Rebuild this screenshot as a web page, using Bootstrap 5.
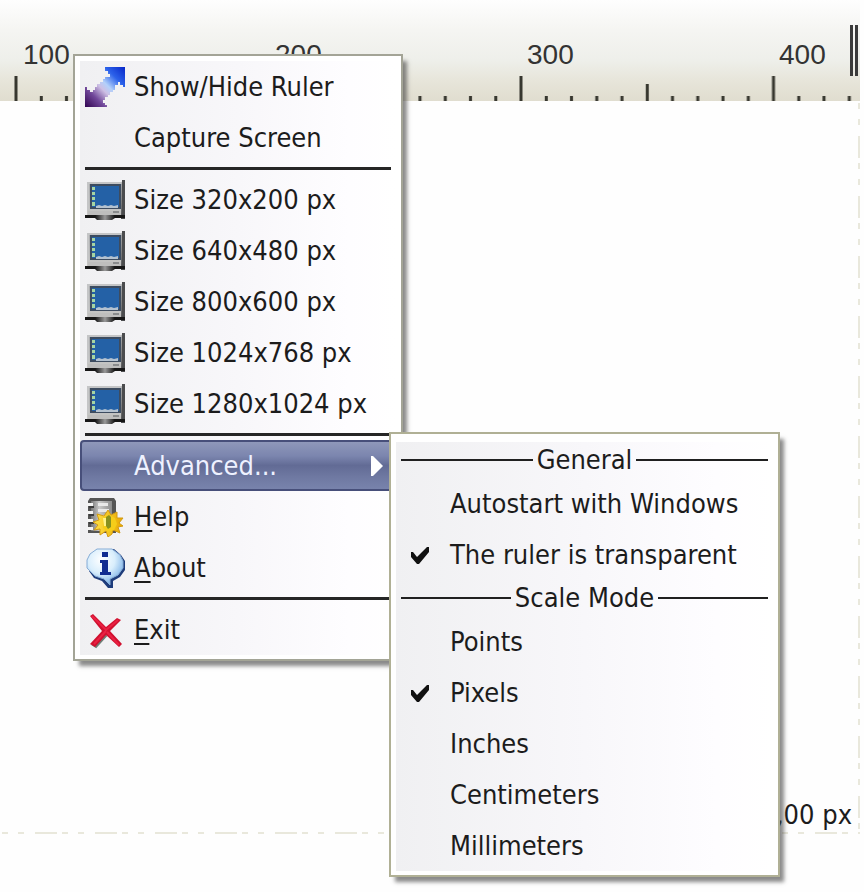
<!DOCTYPE html>
<html lang="en">
<head>
<meta charset="utf-8">
<meta name="viewport" content="width=device-width, initial-scale=1">
<title>Screen Ruler</title>
<link href="https://cdn.jsdelivr.net/npm/bootstrap@5.3.0/dist/css/bootstrap.min.css" rel="stylesheet">
<style>
  body { font-family: "DejaVu Sans Condensed", "DejaVu Sans", sans-serif; font-size: 27px; color: #1c1c1c; background: #fefefe; }
  .ruler-bar { background: linear-gradient(#fefefe 0, #f5f5f2 30%, #eeefea 60%, #e7e5da 80%, #e0ddcf 100%); font-family: "Liberation Sans", sans-serif; font-size: 28px; line-height: 28px; color: #333; height: 101px; padding: 41px 0 0 23px; margin-right: 4px; }
  .ruler-bar .major { flex: 0 0 252px; }
  .ruler-bar .ticks { position: absolute; left: 0; bottom: 0; width: 100%; height: 25px; }
  .grip { position: absolute; right: 2px; top: 25px; width: 8px; height: 51px; border: solid #3a3a3a; border-width: 0 3px; }
  .capture-area { margin: 0 4px 58px 0; line-height: 32px; padding: 0 8px 3px 0;
    --dash: transparent 0 2px, #e9e8dc 2px 8px, transparent 8px 18px, #e9e8dc 18px 24px, transparent 24px 35px, #e9e8dc 35px 57px, transparent 57px 60px;
    background: repeating-linear-gradient(180deg, var(--dash)) right top / 2px 100% no-repeat, repeating-linear-gradient(90deg, var(--dash)) left bottom / 100% 2px no-repeat; }
  .popup { position: absolute; border: 2px solid #a3a496; background: #fff; padding: 5px 5px 4px; box-shadow: 5px 6px 4px -1px rgba(60, 60, 60, .6); }
  .popup-main { left: 73px; top: 54px; width: 330px; z-index: 2; }
  .popup-sub { left: 389px; top: 432px; width: 391px; z-index: 3; border-color: #b0b095; padding: 8px 5px 4px; }
  .popup-face { background: linear-gradient(90deg, #f0f0f2, #f8f7fa 50%, #fefdff 85%, #fff); }
  .entry { display: flex; align-items: center; width: 100%; height: 51px; border: 0; background: none; padding: 0 5px; color: inherit; text-align: left; white-space: nowrap; line-height: 32px; }
  .entry svg, .entry .blank { flex: 0 0 40px; width: 40px; height: 40px; margin-right: 9px; }
  .entry u { text-decoration-thickness: 2px; text-underline-offset: 4px; }
  .entry.active { border: 2px solid #474f7a; border-radius: 4px; padding: 0 3px; color: #eef1ff; background: linear-gradient(#8f98ba, #7b85ae 30%, #626b95 50%, #6f79a2 75%, #7883ac); }
  .entry.active svg { flex: 0 0 12px; width: 12px; height: 20px; margin: 0 0 0 auto; }
  .rule { height: 11px; padding: 4px 5px; }
  .rule::before { content: ""; display: block; height: 3px; background: #262626; }
  .popup-sub .entry { padding: 0 5px 0 14px; }
  .popup-sub .entry svg, .popup-sub .entry .blank { flex: 0 0 20px; width: 20px; height: 20px; margin-right: 20px; }
  .heading { height: 36px; line-height: 32px; padding: 0 5px; }
  .heading::before, .heading::after { content: ""; flex: 1; height: 2px; background: #202020; }
</style>
</head>
<body>
<svg class="position-absolute" width="0" height="0" aria-hidden="true">
  <defs>
    <linearGradient id="arrowFill" x1="1" y1="0" x2="0" y2="1">
      <stop offset="0" stop-color="#0726c8"/><stop offset=".25" stop-color="#2c62ea"/><stop offset=".45" stop-color="#b3d0fa"/><stop offset=".56" stop-color="#cdbfe4"/><stop offset=".75" stop-color="#71489a"/><stop offset="1" stop-color="#30024f"/>
    </linearGradient>
    <linearGradient id="bezel" x1="0" y1="0" x2="0" y2="1"><stop offset="0" stop-color="#a9abad"/><stop offset="1" stop-color="#c9c9c7"/></linearGradient>
    <linearGradient id="standFill"><stop offset="0" stop-color="#111"/><stop offset=".5" stop-color="#999"/><stop offset="1" stop-color="#111"/></linearGradient>
    <radialGradient id="bubble" cx=".4" cy=".3" r=".75"><stop offset="0" stop-color="#fff"/><stop offset=".5" stop-color="#d9eefc"/><stop offset="1" stop-color="#6fa9e4"/></radialGradient>
    <linearGradient id="pageFill"><stop offset="0" stop-color="#777"/><stop offset=".4" stop-color="#c9c9c9"/><stop offset="1" stop-color="#8c8c8c"/></linearGradient>
    <linearGradient id="sunFill"><stop offset="0" stop-color="#ffe44a"/><stop offset="1" stop-color="#e9a800"/></linearGradient>
    <pattern id="tickSet" width="2525" height="250" patternUnits="userSpaceOnUse" patternTransform="translate(16 0) scale(.1)">
      <path d="M0 0H15V250H0zM2510 0H2525V250H2510zM1248 80H1278V250H1248zM238 200h30v50h-30zM490 200h30v50h-30zM743 200h30v50h-30zM995 200h30v50h-30zM1500 200h30v50h-30zM1753 200h30v50h-30zM2005 200h30v50h-30zM2258 200h30v50h-30z" fill="#37372f"/>
    </pattern>
    <symbol id="monitor" viewBox="0 0 40 40">
      <path d="M2 2H37V36H2z" fill="url(#bezel)"/><path d="M2 2H37V4H4V30H2z" fill="#c4c5c6"/>
      <path d="M37 0h3v39h-4z" fill="#4b4c4e"/><path d="M0 35h40v3H0z" fill="#161616"/><path d="M3 31h33v4H3z" fill="#bebebd"/>
      <path d="M10 35h20v3l-3 2H12l-2-2z" fill="url(#standFill)"/>
      <path d="M5 4h31v25H5z" fill="#3d4c60"/><path d="M7 6h27v21H7z" fill="#2461a6"/>
      <path d="M7 7h3v3H7zM7 12h3v3H7zM7 17h3v3H7zM7 22h3v4H7z" fill="#a6d5a4"/>
      <path d="M11 26l3-1 3 1 3-1 3 1 3-1 3 1 4-1v3H11z" fill="#b4c2d0"/>
      <path d="M28 31h6v2h-6z" fill="#898b8c"/>
    </symbol>
    <symbol id="tick" viewBox="0 0 20 20"><path d="M1 7h2l4 5L17 2h2v5L9 19H7L1 12z" fill="#111"/></symbol>
  </defs>
</svg>

<main class="position-relative min-vh-100 d-flex flex-column overflow-hidden">
  <header class="ruler-bar position-relative d-flex overflow-hidden">
    <span class="major">100</span><span class="major">200</span><span class="major">300</span><span>400</span>
    <svg class="ticks" aria-hidden="true"><rect width="100%" height="25" fill="url(#tickSet)"/></svg>
    <span class="grip"></span>
  </header>
  <section class="capture-area flex-grow-1 d-flex align-items-end justify-content-end">,00 px</section>

  <div class="popup popup-main" role="menu" aria-label="Ruler">
    <div class="popup-face">
      <button type="button" class="entry" role="menuitem">
        <svg viewBox="0 0 40 40" aria-hidden="true"><path d="M20 0H40V20H38V18H35V15H33V18H30V23H28V25H25V28H23V30H20V33H18V36H20V38H22V40H0V20H2V23H5V25H8V23H10V20H12V17H15V15H18V12H20V10H25V7H23V4H20z" fill="url(#arrowFill)"/></svg>
        Show/Hide Ruler</button>
      <button type="button" class="entry" role="menuitem"><span class="blank"></span>Capture Screen</button>
      <div class="rule" role="separator"></div>
      <button type="button" class="entry" role="menuitem"><svg aria-hidden="true"><use href="#monitor"/></svg>Size 320x200 px</button>
      <button type="button" class="entry" role="menuitem"><svg aria-hidden="true"><use href="#monitor"/></svg>Size 640x480 px</button>
      <button type="button" class="entry" role="menuitem"><svg aria-hidden="true"><use href="#monitor"/></svg>Size 800x600 px</button>
      <button type="button" class="entry" role="menuitem"><svg aria-hidden="true"><use href="#monitor"/></svg>Size 1024x768 px</button>
      <button type="button" class="entry" role="menuitem"><svg aria-hidden="true"><use href="#monitor"/></svg>Size 1280x1024 px</button>
      <div class="rule" role="separator"></div>
      <button type="button" class="entry active" role="menuitem" aria-haspopup="true" aria-expanded="true"><span class="blank"></span>Advanced...
        <svg class="me-2" viewBox="0 0 12 20" aria-hidden="true"><path d="M0 0h2l10 10L2 20H0z" fill="#fff"/></svg></button>
      <button type="button" class="entry" role="menuitem">
        <svg viewBox="0 0 40 40" aria-hidden="true">
          <path d="M5 1H29L31 4V36H3V4z" fill="#555"/><path d="M6 4H27V34H6z" fill="url(#pageFill)"/>
          <path d="M13 6h10v3H13zM13 12h11v3H13zM13 18h7v3H13zM12 25h4v3h-4z" fill="#e9e9e9"/>
          <path d="M2 6h6v3H2zM2 14h6v3H2zM2 22h6v3H2zM2 30h6v3H2z" fill="#f4f4f4"/><path d="M4 9h5v2H4zM4 17h5v2H4zM4 25h5v2H4z" fill="#3c3c3c"/>
          <path d="M23 13l3 5 6-3v6l6 0-4 5 4 3-5 1 2 6-7-3-1 4-4 3-2-6-6 4v-6l-6 1 4-5-5-3 6-2-2-6 7 2z" fill="url(#sunFill)" stroke="#d29a13"/>
          <path d="M19 20l5-2 6 3 2 6-3 6-6 2-5-4z" fill="#f6cd19"/><path d="M21 20l3-2 2 2v10l-3 2-2-3z" fill="#88911f"/><path d="M18 21h3v8h-2z" fill="#fff38b"/>
        </svg><span><u>H</u>elp</span></button>
      <button type="button" class="entry" role="menuitem">
        <svg viewBox="0 0 40 40" aria-hidden="true">
          <path d="M13 1H29L36 7l4 6v9l-5 7-7 4v7h-5l-6-7-8-3-5-7V11l5-7z" fill="#1e3c7b"/>
          <path d="M12 1H27L35 7l3 6v7l-5 7-8 4v6l-6-6-9-3-8-8v-8L5 6z" fill="url(#bubble)" stroke="#86acd6"/>
          <path d="M17 4h6v5h-6zM15 12h8v12h3v3H15v-3h2v-9h-2z" fill="#102c91"/>
        </svg><span><u>A</u>bout</span></button>
      <div class="rule" role="separator"></div>
      <button type="button" class="entry" role="menuitem">
        <svg viewBox="0 0 40 40" aria-hidden="true">
          <path d="M8 35L11 37L21 26L19 24z" fill="#6f7d76" stroke="#6f7d76" stroke-width="2"/>
          <path d="M5 6L8 4L21 17L32 8L36 10L25 21L37 34L34 37L21 25L10 37L5 34L17 21z" fill="#d0112f"/><path d="M7 6L21 20L33 10M21 21L9 34M22 22L34 35" fill="none" stroke="#ea2143" stroke-width="2"/>
        </svg><span><u>E</u>xit</span></button>
    </div>
  </div>

  <div class="popup popup-sub" role="menu" aria-label="Advanced">
    <div class="popup-face">
      <div class="heading d-flex align-items-center gap-1">General</div>
      <button type="button" class="entry" role="menuitemcheckbox" aria-checked="false"><span class="blank"></span>Autostart with Windows</button>
      <button type="button" class="entry" role="menuitemcheckbox" aria-checked="true"><svg aria-hidden="true"><use href="#tick"/></svg>The ruler is transparent</button>
      <div class="heading d-flex align-items-center gap-1">Scale Mode</div>
      <button type="button" class="entry" role="menuitemradio" aria-checked="false"><span class="blank"></span>Points</button>
      <button type="button" class="entry" role="menuitemradio" aria-checked="true"><svg aria-hidden="true"><use href="#tick"/></svg>Pixels</button>
      <button type="button" class="entry" role="menuitemradio" aria-checked="false"><span class="blank"></span>Inches</button>
      <button type="button" class="entry" role="menuitemradio" aria-checked="false"><span class="blank"></span>Centimeters</button>
      <button type="button" class="entry" role="menuitemradio" aria-checked="false"><span class="blank"></span>Millimeters</button>
    </div>
  </div>
</main>
<script src="https://cdn.jsdelivr.net/npm/bootstrap@5.3.0/dist/js/bootstrap.bundle.min.js"></script>
</body>
</html>
